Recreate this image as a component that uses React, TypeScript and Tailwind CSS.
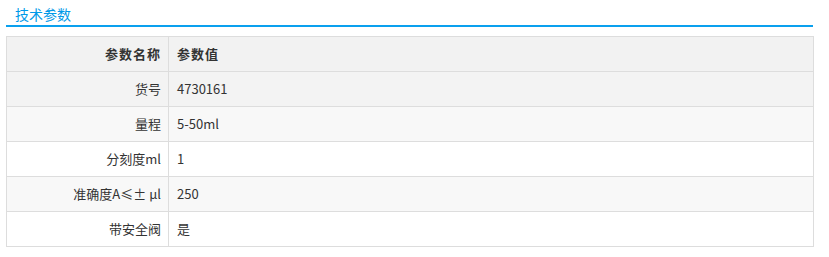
import React from "react";

const rows: { k: string; v: string; bg: string }[] = [
  { k: "货号", v: "4730161", bg: "bg-[#f3f3f3]" },
  { k: "量程", v: "5-50ml", bg: "bg-[#f8f8f8]" },
  { k: "分刻度ml", v: "1", bg: "bg-white" },
  { k: "准确度A≤± μl", v: "250", bg: "bg-[#f8f8f8]" },
  { k: "带安全阀", v: "是", bg: "bg-white" },
];

export default function App() {
  return (
    <div
      className="w-[829px] h-[257px] bg-white px-[6px] pt-0"
      style={{ fontFamily: '"Noto Sans CJK SC", "Liberation Sans", sans-serif' }}
    >
      <div className="h-[25px] pl-[9px] flex items-center">
        <span className="text-[14px] leading-none text-[#0099e8] pt-[2px]">技术参数</span>
      </div>
      <div className="h-[2px] w-[807px] bg-[#0aa0ee]" />
      <table className="mt-[9px] w-[808px] border-collapse border border-[#dddddd] text-[13px] text-[#333]">
        <tbody>
          <tr className="bg-[#f2f2f2] h-[35px]">
            <th className="w-[162px] border border-[#dddddd] text-right pr-[7px] font-bold tracking-[1px] text-[#333]">
              参数名称
            </th>
            <th className="border border-[#dddddd] text-left pl-[8px] font-bold tracking-[1px] text-[#333]">
              参数值
            </th>
          </tr>
          {rows.map((r) => (
            <tr key={r.k} className={`${r.bg} h-[35px]`}>
              <td className="border border-[#dddddd] text-right pr-[7px]">{r.k}</td>
              <td className="border border-[#dddddd] text-left pl-[8px]">{r.v}</td>
            </tr>
          ))}
        </tbody>
      </table>
    </div>
  );
}
